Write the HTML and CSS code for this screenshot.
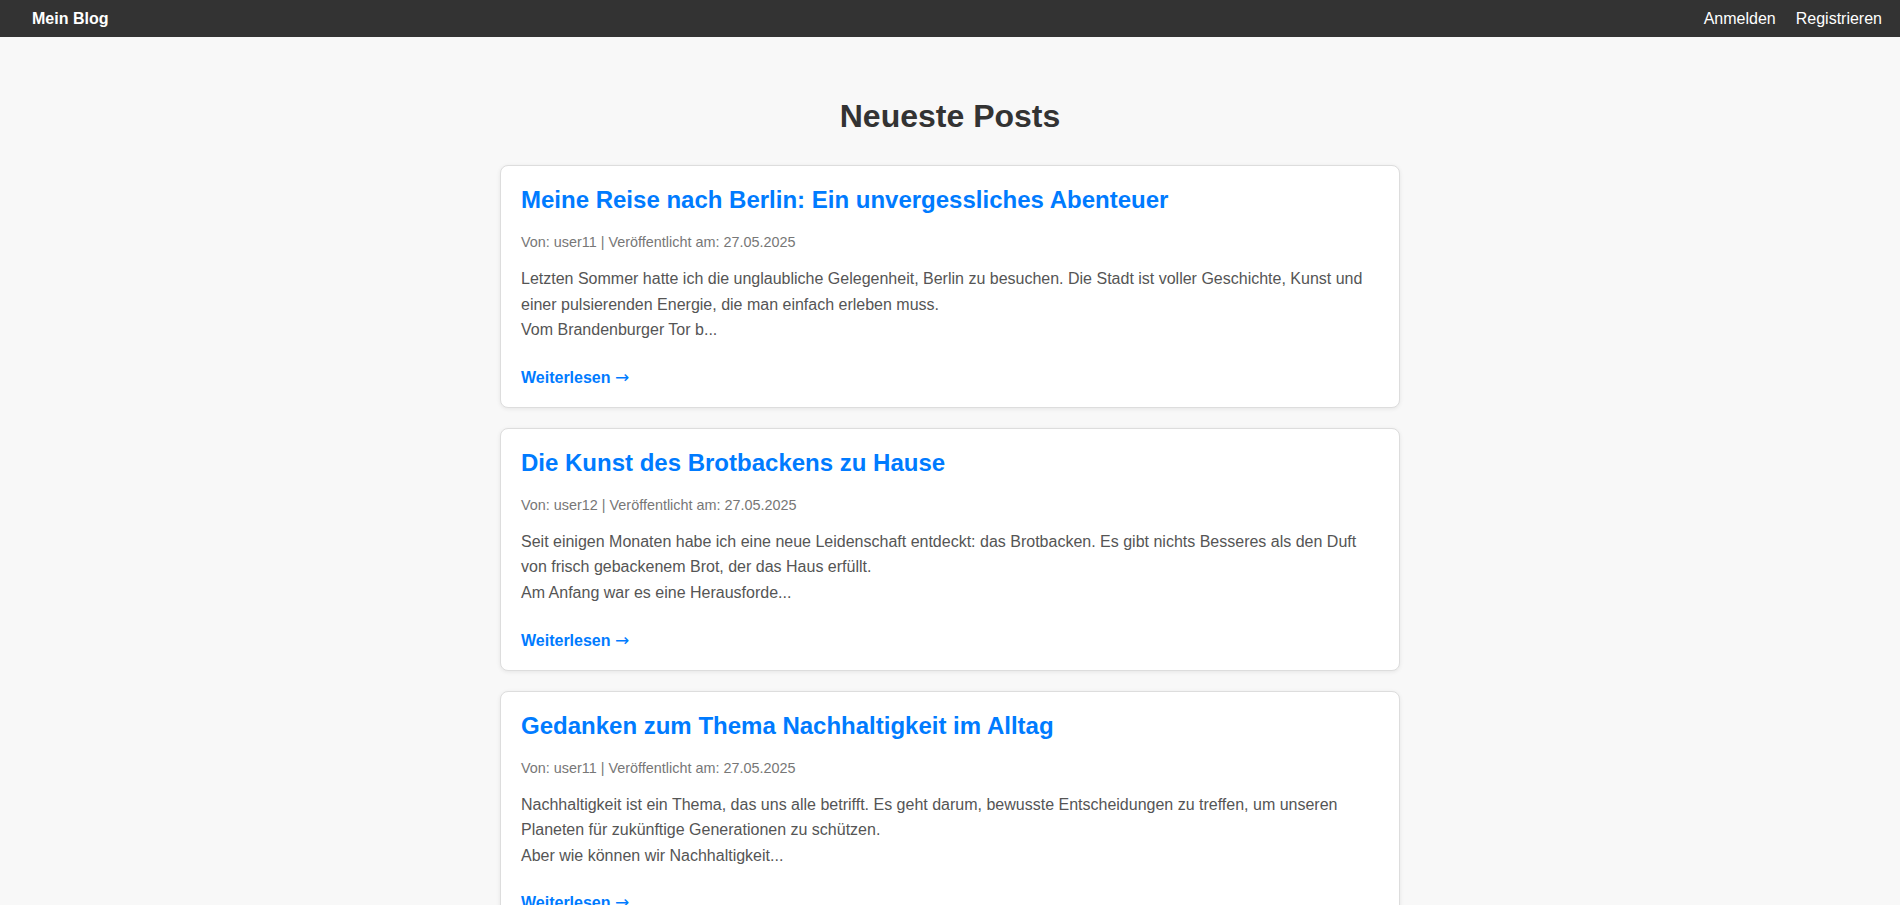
FILE: index.html
```html
<!DOCTYPE html>
<html lang="de">
<head>
<meta charset="utf-8">
<title>Mein Blog</title>
<link rel="stylesheet" href="styles.css">
</head>
<body>
<header class="topbar">
  <a class="logo" href="#">Mein Blog</a>
  <nav class="nav">
    <a href="#">Anmelden</a>
    <a href="#">Registrieren</a>
  </nav>
</header>
<main class="container">
  <h1 class="page-title">Neueste Posts</h1>

  <article class="card">
    <h2 class="card-title"><a href="#">Meine Reise nach Berlin: Ein unvergessliches Abenteuer</a></h2>
    <p class="meta">Von: user11 | Veröffentlicht am: 27.05.2025</p>
    <p class="excerpt">Letzten Sommer hatte ich die unglaubliche Gelegenheit, Berlin zu besuchen. Die Stadt ist voller Geschichte, Kunst und einer pulsierenden Energie, die man einfach erleben muss.<br>Vom Brandenburger Tor b...</p>
    <a class="more" href="#">Weiterlesen <span class="arrow">→</span></a>
  </article>

  <article class="card">
    <h2 class="card-title"><a href="#">Die Kunst des Brotbackens zu Hause</a></h2>
    <p class="meta">Von: user12 | Veröffentlicht am: 27.05.2025</p>
    <p class="excerpt">Seit einigen Monaten habe ich eine neue Leidenschaft entdeckt: das Brotbacken. Es gibt nichts Besseres als den Duft von frisch gebackenem Brot, der das Haus erfüllt.<br>Am Anfang war es eine Herausforde...</p>
    <a class="more" href="#">Weiterlesen <span class="arrow">→</span></a>
  </article>

  <article class="card">
    <h2 class="card-title"><a href="#">Gedanken zum Thema Nachhaltigkeit im Alltag</a></h2>
    <p class="meta">Von: user11 | Veröffentlicht am: 27.05.2025</p>
    <p class="excerpt">Nachhaltigkeit ist ein Thema, das uns alle betrifft. Es geht darum, bewusste Entscheidungen zu treffen, um unseren Planeten für zukünftige Generationen zu schützen.<br>Aber wie können wir Nachhaltigkeit...</p>
    <a class="more" href="#">Weiterlesen <span class="arrow">→</span></a>
  </article>
</main>
</body>
</html>
```
FILE: styles.css
```css
* { box-sizing: border-box; }

body {
  margin: 0;
  background: #f8f8f8;
  font-family: "Liberation Sans", Arial, sans-serif;
  font-size: 16px;
  color: #333;
}

a { text-decoration: none; }

.topbar {
  height: 37px;
  background: #333;
  display: flex;
  align-items: center;
  justify-content: space-between;
  padding: 0 18px 0 32px;
}

.logo {
  color: #fff;
  font-weight: bold;
  font-size: 16px;
}

.nav {
  display: flex;
  gap: 20px;
}

.nav a {
  color: #fff;
  font-size: 16px;
}

.container {
  max-width: 900px;
  margin: 0 auto;
  padding-top: 40px;
}

.page-title {
  text-align: center;
  font-size: 32px;
  color: #333;
  margin: 21px 0 30px;
  line-height: normal;
}

.card {
  background: #fff;
  border: 1px solid #ddd;
  border-radius: 8px;
  box-shadow: 0 1px 4px rgba(0, 0, 0, 0.08);
  padding: 20px;
  margin-bottom: 20px;
}

.card-title {
  margin: 0 0 20px;
  font-size: 24px;
  line-height: normal;
}

.card-title a { color: #007bff; }

.meta {
  margin: 0 0 16px;
  font-size: 14.4px;
  color: #777;
  line-height: normal;
}

.excerpt {
  margin: 0 0 25px;
  color: #555;
  line-height: 1.6;
}

.more {
  display: block;
  color: #007bff;
  font-weight: bold;
  line-height: 18px;
}

.arrow {
  font-family: "DejaVu Sans", sans-serif;
  font-weight: normal;
  font-size: 17px;
}
```
